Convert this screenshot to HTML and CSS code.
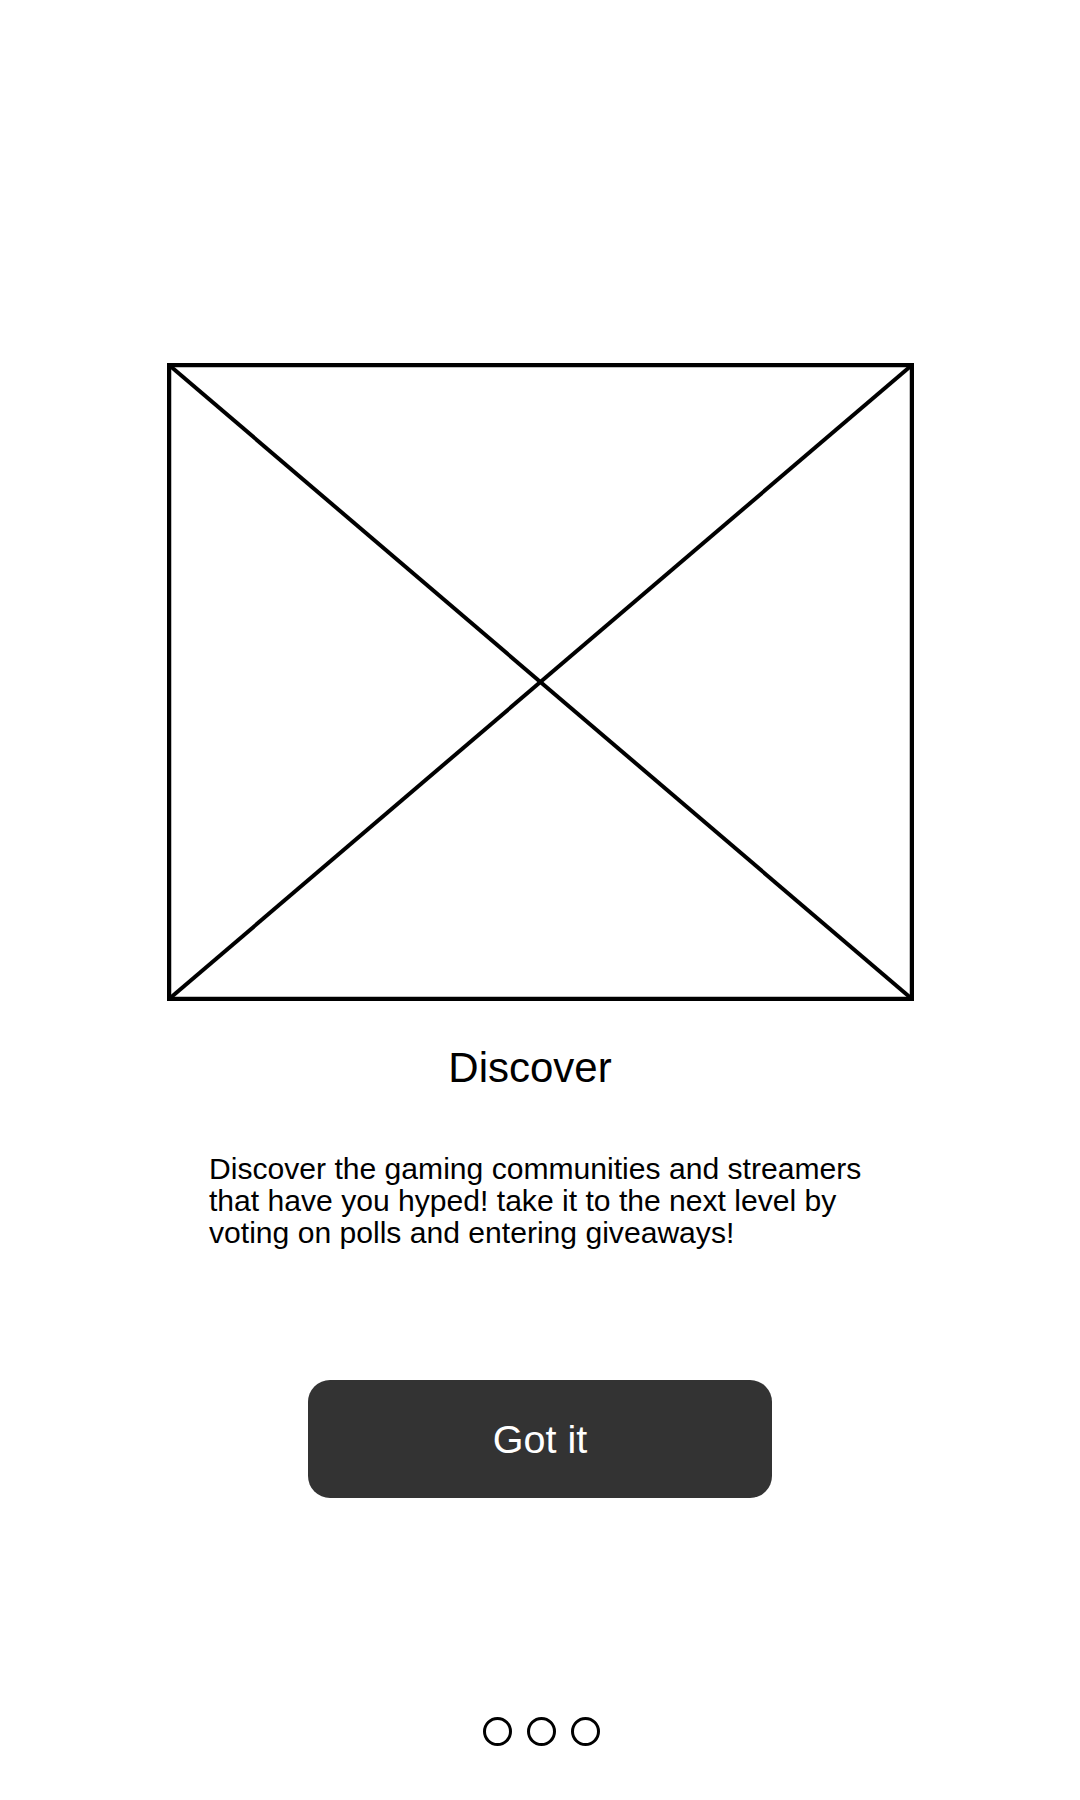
FILE: index.html
```html
<!DOCTYPE html>
<html lang="en">
<head>
<meta charset="utf-8">
<title>Discover</title>
<link rel="stylesheet" href="styles.css">
</head>
<body>
<main class="screen">
  <div class="hero">
    <svg class="placeholder" viewBox="0 0 747 638" width="747" height="638" aria-hidden="true">
      <rect x="2" y="2" width="743" height="634" fill="none" stroke="#000" stroke-width="4.5"/>
      <line x1="2" y1="2" x2="745" y2="636" stroke="#000" stroke-width="4"/>
      <line x1="745" y1="2" x2="2" y2="636" stroke="#000" stroke-width="4"/>
    </svg>
  </div>
  <h1 class="title">Discover</h1>
  <p class="desc">Discover the gaming communities and streamers that have you hyped! take it to the next level by voting on polls and entering giveaways!</p>
  <button class="cta" type="button">Got it</button>
  <div class="dots">
    <span class="dot"></span>
    <span class="dot"></span>
    <span class="dot"></span>
  </div>
</main>
</body>
</html>
```
FILE: styles.css
```css
html, body {
  margin: 0;
  padding: 0;
  background: #ffffff;
}
body {
  font-family: "Liberation Sans", Arial, sans-serif;
  color: #000;
}
.screen {
  width: 1080px;
  height: 1800px;
  display: flex;
  flex-direction: column;
  align-items: center;
}
.hero {
  margin-top: 363px;
  width: 747px;
  height: 638px;
  padding-left: 1px;
}
.placeholder {
  display: block;
}
.title {
  margin: 43px 0 0 0;
  font-weight: 400;
  font-size: 42px;
  line-height: 48px;
  width: 1080px;
  box-sizing: border-box;
  padding-right: 20px;
  text-align: center;
}
.desc {
  margin: 61px 0 0 0;
  align-self: flex-start;
  margin-left: 209px;
  width: 676px;
  font-size: 30.1px;
  line-height: 32px;
}
.cta {
  margin-top: 131px;
  width: 464px;
  height: 118px;
  border: none;
  border-radius: 22px;
  background: #333333;
  color: #ffffff;
  font-family: "Liberation Sans", Arial, sans-serif;
  font-size: 39.5px;
  padding: 0;
}
.dots {
  margin-top: 219px;
  display: flex;
  gap: 15px;
  padding-left: 2px;
}
.dot {
  width: 29px;
  height: 29px;
  box-sizing: border-box;
  border: 3px solid #000;
  border-radius: 50%;
}
```
